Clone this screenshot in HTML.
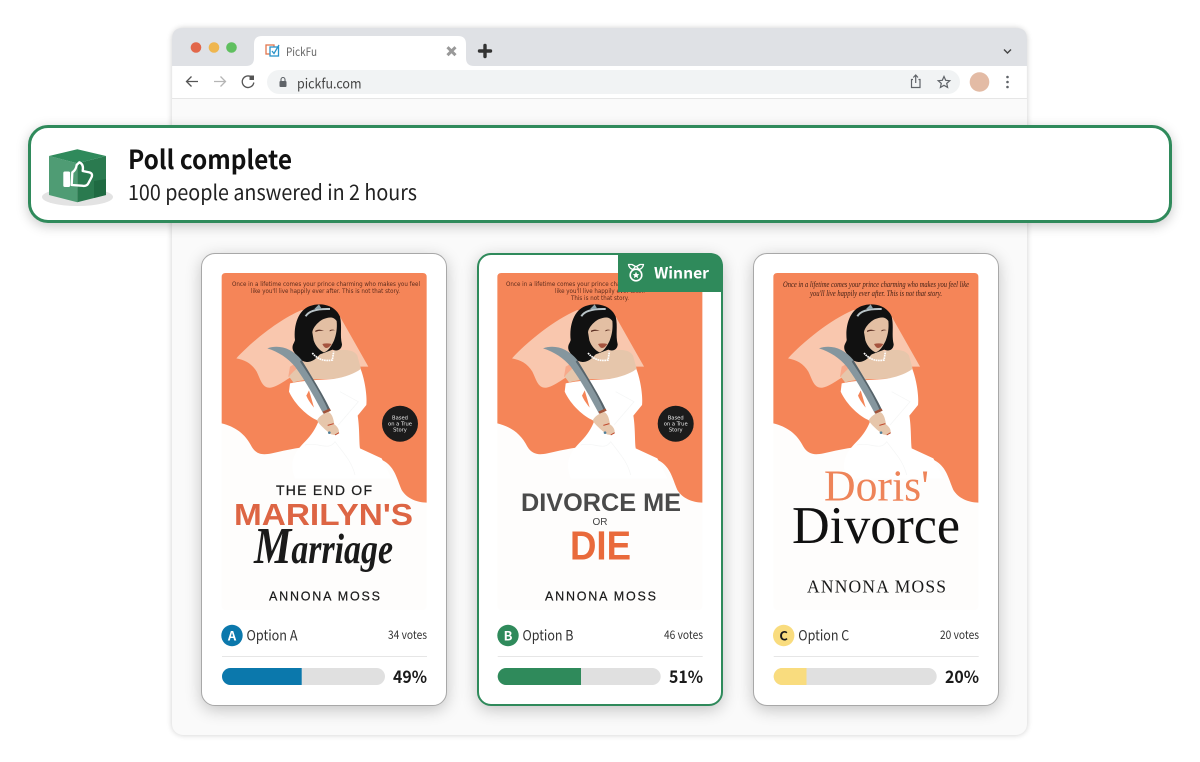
<!DOCTYPE html>
<html><head><meta charset="utf-8"><style>
html,body{margin:0;padding:0;background:#fff}
body{width:1200px;height:762px;position:relative;overflow:hidden}
.b{position:absolute;box-sizing:border-box}
svg{position:absolute;left:0;top:0}
.ui{font-family:"Noto Sans CJK JP","Liberation Sans",sans-serif}
</style></head><body>
<div class="b" style="left:172px;top:28px;width:855px;height:707px;border-radius:11px;background:#fafafa;box-shadow:0 0 6px rgba(0,0,0,.2)"></div>
<div class="b" style="left:201px;top:253px;width:246px;height:453px;border-radius:14px;background:#fff;border:1px solid #a8a8a8;box-shadow:0 4px 16px rgba(0,0,0,.22)"></div>
<div class="b" style="left:477px;top:253px;width:246px;height:453px;border-radius:14px;background:#fff;border:2px solid #2f8a5b;box-shadow:0 4px 16px rgba(0,0,0,.22)"></div>
<div class="b" style="left:753px;top:253px;width:246px;height:453px;border-radius:14px;background:#fff;border:1px solid #a8a8a8;box-shadow:0 4px 16px rgba(0,0,0,.22)"></div>
<svg width="1200" height="762" viewBox="0 0 1200 762" xmlns="http://www.w3.org/2000/svg">
<defs>
<g id="art">
<g transform="translate(195,245) scale(.33333)">
<rect x="80" y="84" width="615" height="1011" rx="12" fill="#fefdfc"/>
<path fill="#f58558" d="M80 535C120 545 150 565 170 605C185 630 205 630 230 625C290 612 340 600 400 605C470 612 530 625 570 650C600 670 605 700 620 735C635 760 665 772 695 773L695 96Q695 84 683 84L92 84Q80 84 80 96Z"/>
<path fill="#f9c7ae" d="M124 340C170 290 250 225 320 195L435 215L520 365L480 365L290 395C265 410 240 430 220 428C200 425 195 400 185 380C170 355 150 345 124 340Z"/>
<path fill="#f7a98a" d="M285 365L320 345L300 405L280 395Z"/>
<path fill="#e6c6ab" d="M365 305L415 318C440 312 478 312 487 332L498 372C470 390 450 402 400 402C370 402 330 402 295 412L282 395C300 370 345 345 365 305Z"/>
<path fill="#111" d="M300 285C295 240 310 195 345 183C375 172 420 178 435 215C442 245 434 270 441 298C440 315 425 320 413 314L375 328L368 335C360 345 345 352 335 351C318 350 303 332 294 316C289 300 298 295 300 285Z"/>
<path fill="#e3bfa3" d="M352 262C354 246 372 228 386 222C398 218 414 212 425 228C427 250 424 268 417 287C408 306 398 320 386 322C374 316 362 304 356 286Z"/>
<path fill="#5b2f22" d="M361 257Q374 250 387 258Q374 256 361 261Z"/>
<path fill="#5b2f22" d="M404 256Q412 252 420 256Q412 255 404 259Z"/>
<path fill="#a5543f" d="M382 297Q395 293 410 297Q400 312 390 308Q385 304 382 297Z"/>
<path fill="none" stroke="#b9c4c8" stroke-width="6" d="M332 214Q345 190 405 192"/>
<path fill="#8ea4ab" d="M358 192L372 178L380 192Z"/>
<path fill="none" stroke="#fff" stroke-width="5" stroke-dasharray="5 2" d="M352 324Q375 352 412 345L416 320"/>
<path fill="#fff" d="M285 415C330 405 380 405 415 402C450 397 480 385 497 372C508 400 517 450 514 480L488 512C494 550 492 590 495 610L560 640L590 700L300 700C280 650 300 620 330 590C350 570 362 550 370 530L365 525C340 515 300 480 282 440Z"/>
<path fill="#f58558" d="M342 436C347 452 352 470 357 488C349 478 339 465 334 452Z"/>
<path fill="none" stroke="#f4f5f5" stroke-width="2" d="M435 440L490 470L430 540M330 600C370 590 400 620 420 590C450 630 470 650 480 690"/>
<path fill="#85969e" d="M217 310C250 298 290 308 320 345C350 395 385 450 406 495L385 506C360 460 330 405 300 365C280 340 250 320 217 310Z"/>
<path fill="#56636a" d="M320 345C350 395 385 450 406 495L400 498C380 450 345 395 315 350Z"/>
<path fill="#a0533a" d="M383 500L404 490L408 497L387 507Z"/>
<path fill="#e6c6ab" d="M366 526C372 515 385 505 400 501C412 505 416 525 418 538C428 545 434 555 431 565C424 572 408 572 398 560C385 548 372 538 366 526Z"/>
<path fill="none" stroke="#c0482c" stroke-width="3" d="M398 541L416 536M420 570L432 563"/>
<circle cx="403" cy="563" r="4" fill="#4f7f9a"/>
</g>
</g>
<g id="opt">
<line x1="222" y1="656.500" x2="427" y2="656.500" stroke="#e6e6e6"/>
<rect x="222" y="668" width="163" height="17" rx="8.500" fill="#e0e0e0"/>
</g>
</defs>

<!-- browser chrome -->
<path fill="#dfe1e5" d="M172 66V39Q172 28 183 28H1016Q1027 28 1027 39V66Z"/>
<rect x="172.500" y="66" width="854" height="32" fill="#fff"/>
<line x1="172" y1="98.500" x2="1027" y2="98.500" stroke="#e6e6e6"/>
<circle cx="196" cy="47.500" r="5.300" fill="#e2674a"/><circle cx="214" cy="47.500" r="5.300" fill="#efb64f"/><circle cx="231.500" cy="47.500" r="5.300" fill="#5fbf5f"/>
<path fill="#fff" d="M246 66Q254 66 254 58V44Q254 36 262 36H458Q466 36 466 44V58Q466 66 474 66Z"/>
<rect x="266" y="45" width="8" height="9" fill="none" stroke="#e2764e" stroke-width="1.300"/>
<rect x="270" y="47" width="8.500" height="9" fill="#fff" stroke="#2a93c9" stroke-width="1.300"/>
<path d="M272 51L274 53.500L279 45" fill="none" stroke="#2a93c9" stroke-width="1.300"/>
<text x="286" y="56" class="ui" font-size="11.500" fill="#666" textLength="31" lengthAdjust="spacingAndGlyphs">PickFu</text>
<path d="M447.500 47.200L455.500 55.200M455.500 47.200L447.500 55.200" stroke="#999" stroke-width="3"/>
<path d="M485 45.500V56.500M479.500 51H490.500" stroke="#333" stroke-width="3.400" stroke-linecap="round"/>
<path d="M1004 49.500L1007.500 53L1011 49.500" fill="none" stroke="#444" stroke-width="1.400"/>
<path d="M198 81.500H187M191.500 76.500L186.500 81.500L191.500 86.500" fill="none" stroke="#555" stroke-width="1.300"/>
<path d="M214 81.500H225M220.500 76.500L225.500 81.500L220.500 86.500" fill="none" stroke="#b5b5b5" stroke-width="1.300"/>
<path d="M252.500 78A5.800 5.800 0 1 0 253.800 82.500" fill="none" stroke="#555" stroke-width="1.300"/>
<path d="M249.500 75.500H254V80H249.500Z" fill="#555"/>
<rect x="267" y="70" width="693" height="24" rx="12" fill="#f1f3f4"/>
<rect x="279.500" y="81" width="7" height="6" rx="1" fill="#5f6368"/>
<path d="M281 81V79.500A2 2 0 0 1 285 79.500V81" fill="none" stroke="#5f6368" stroke-width="1.100"/>
<text x="297" y="88.500" class="ui" font-size="13.500" fill="#444" textLength="64.500" lengthAdjust="spacingAndGlyphs">pickfu.com</text>
<path d="M913 79.500H911.500V87.500H920V79.500H918.500M915.700 83V75.500M913.300 77.500L915.700 75L918 77.500" fill="none" stroke="#5f6368" stroke-width="1.200"/>
<path d="M944 76.500L945.700 80.300L949.800 80.700L946.700 83.400L947.600 87.400L944 85.300L940.400 87.400L941.300 83.400L938.200 80.700L942.300 80.300Z" fill="none" stroke="#5f6368" stroke-width="1.200"/>
<circle cx="979.500" cy="82" r="9.800" fill="#e3bba5"/>
<circle cx="1007.500" cy="77" r="1.300" fill="#5f6368"/><circle cx="1007.500" cy="82" r="1.300" fill="#5f6368"/><circle cx="1007.500" cy="87" r="1.300" fill="#5f6368"/>

<!-- covers -->
<use href="#art"/>
<use href="#art" x="275.700"/>
<use href="#art" x="551.700"/>

<!-- badges (A and B only) -->
<circle cx="400" cy="423.700" r="18" fill="#1b1b1b"/>
<circle cx="675.700" cy="423.700" r="18" fill="#1b1b1b"/>
<g font-family="'DejaVu Sans',sans-serif" font-size="5.200" fill="#eee" text-anchor="middle">
<text x="400" y="419.500">Based</text><text x="400" y="425.500">on a True</text><text x="400" y="431.500">Story</text>
<text x="675.700" y="419.500">Based</text><text x="675.700" y="425.500">on a True</text><text x="675.700" y="431.500">Story</text>
</g>

<!-- cover A text -->
<g font-family="'DejaVu Sans',sans-serif" fill="#5e2c1c" font-size="6.200">
<text x="232" y="286" textLength="188" lengthAdjust="spacingAndGlyphs">Once in a lifetime comes your prince charming who makes you feel</text>
<text x="251" y="293" textLength="149" lengthAdjust="spacingAndGlyphs">like you'll live happily ever after. This is not that story.</text>
</g>
<text x="276" y="495" textLength="96" font-family="'Liberation Sans',sans-serif" font-size="14" fill="#1d1d1d" stroke="#1d1d1d" stroke-width=".25">THE END OF</text>
<text x="234" y="525" textLength="179" lengthAdjust="spacingAndGlyphs" font-family="'Liberation Sans',sans-serif" font-weight="bold" font-size="30.500" fill="#dd6544">MARILYN'S</text>
<text x="254" y="563" textLength="139" lengthAdjust="spacingAndGlyphs" font-family="'Liberation Serif',serif" font-style="italic" font-weight="bold" font-size="42" fill="#1a1a1a"><tspan font-size="52">M</tspan>arriage</text>
<text x="269" y="600.500" textLength="111" font-family="'Liberation Sans',sans-serif" font-size="12.500" fill="#1a1a1a" stroke="#1a1a1a" stroke-width=".2">ANNONA MOSS</text>

<!-- cover B text -->
<g font-family="'DejaVu Sans',sans-serif" fill="#5e2c1c" font-size="6.200">
<text x="506" y="286" textLength="188" lengthAdjust="spacingAndGlyphs">Once in a lifetime comes your prince charming who makes you feel</text>
<text x="555" y="293" textLength="90" lengthAdjust="spacingAndGlyphs">like you'll live happily ever after.</text>
<text x="571" y="300" textLength="58" lengthAdjust="spacingAndGlyphs">This is not that story.</text>
</g>
<text x="521" y="511" textLength="160" lengthAdjust="spacingAndGlyphs" font-family="'Liberation Sans',sans-serif" font-weight="bold" font-size="25" fill="#4a4a4a">DIVORCE ME</text>
<text x="600" y="525" text-anchor="middle" font-family="'Liberation Sans',sans-serif" font-size="10" fill="#444">OR</text>
<text x="570" y="559.500" textLength="61" lengthAdjust="spacingAndGlyphs" font-family="'Liberation Sans',sans-serif" font-weight="bold" font-size="41" fill="#e96a3b">DIE</text>
<text x="545" y="600.500" textLength="111" font-family="'Liberation Sans',sans-serif" font-size="12.500" fill="#1a1a1a" stroke="#1a1a1a" stroke-width=".2">ANNONA MOSS</text>

<!-- cover C text -->
<g font-family="'Liberation Serif',serif" font-style="italic" fill="#3f1e14" font-size="8.500">
<text x="783" y="287" textLength="186" lengthAdjust="spacingAndGlyphs">Once in a lifetime comes your prince charming who makes you feel like</text>
<text x="810" y="296" textLength="132" lengthAdjust="spacingAndGlyphs">you'll live happily ever after. This is not that story.</text>
</g>
<text x="824" y="500.700" textLength="105" lengthAdjust="spacingAndGlyphs" font-family="'Liberation Serif',serif" font-size="44" fill="#ee8459">Doris'</text>
<text x="792" y="543" textLength="168" lengthAdjust="spacingAndGlyphs" font-family="'Liberation Serif',serif" font-size="53" fill="#111">Divorce</text>
<text x="807" y="592.700" textLength="139" font-family="'Liberation Serif',serif" font-size="17.500" fill="#1a1a1a">ANNONA MOSS</text>

<!-- winner tab -->
<path fill="#2f8a5b" d="M618 253H709Q723 253 723 267V292H618Z"/>
<circle cx="636" cy="275" r="5.800" fill="none" stroke="#fff" stroke-width="1.600"/>
<path d="M628.500 264.500C629 267.500 631 269 633 269.500L635.500 266.500L632 264.500ZM643.500 264.500C643 267.500 641 269 639 269.500L636.500 266.500L640 264.500Z" fill="none" stroke="#fff" stroke-width="1.300" stroke-linejoin="round"/>
<path d="M636 271.800L637 274L639.300 274.300L637.600 275.800L638.100 278.100L636 276.900L633.900 278.100L634.400 275.800L632.700 274.300L635 274Z" fill="#fff"/>
<text x="654" y="278.500" class="ui" font-size="15.500" font-weight="700" fill="#fff" textLength="55" lengthAdjust="spacingAndGlyphs">Winner</text>

<!-- footers -->
<g class="ui">
<g><circle cx="232" cy="635.500" r="10.700" fill="#0b78ac"/>
<text x="232" y="640.500" text-anchor="middle" font-size="13" font-weight="700" fill="#fff">A</text>
<text x="246.500" y="640.500" font-size="14.500" fill="#333" textLength="51" lengthAdjust="spacingAndGlyphs">Option A</text>
<text x="388" y="639" font-size="11.500" fill="#333" textLength="39" lengthAdjust="spacingAndGlyphs">34 votes</text>
<use href="#opt"/>
<path fill="#0b78ac" d="M301.700 668H230.500A8.500 8.500 0 0 0 230.500 685H301.700Z"/>
<text x="393" y="683" font-size="17" font-weight="700" fill="#1a1a1a" textLength="34" lengthAdjust="spacingAndGlyphs">49%</text></g>
<g><circle cx="508" cy="635.500" r="10.700" fill="#2f8a5b"/>
<text x="508" y="640.500" text-anchor="middle" font-size="13" font-weight="700" fill="#fff">B</text>
<text x="522.500" y="640.500" font-size="14.500" fill="#333" textLength="51" lengthAdjust="spacingAndGlyphs">Option B</text>
<text x="664" y="639" font-size="11.500" fill="#333" textLength="39" lengthAdjust="spacingAndGlyphs">46 votes</text>
<use href="#opt" x="275.700"/>
<path fill="#2f8a5b" d="M581 668H506.200A8.500 8.500 0 0 0 506.200 685H581Z"/>
<text x="669" y="683" font-size="17" font-weight="700" fill="#1a1a1a" textLength="34" lengthAdjust="spacingAndGlyphs">51%</text></g>
<g><circle cx="783.700" cy="635.500" r="10.700" fill="#f9dc7e"/>
<text x="783.700" y="640.500" text-anchor="middle" font-size="13" font-weight="700" fill="#1a1a1a">C</text>
<text x="798.300" y="640.500" font-size="14.500" fill="#333" textLength="51" lengthAdjust="spacingAndGlyphs">Option C</text>
<text x="940" y="639" font-size="11.500" fill="#333" textLength="39" lengthAdjust="spacingAndGlyphs">20 votes</text>
<use href="#opt" x="551.700"/>
<path fill="#f9dc7e" d="M806.500 668H782.200A8.500 8.500 0 0 0 782.200 685H806.500Z"/>
<text x="945" y="683" font-size="17" font-weight="700" fill="#1a1a1a" textLength="34" lengthAdjust="spacingAndGlyphs">20%</text></g>
</g>
</svg>

<!-- banner -->
<div class="b" style="left:28px;top:125px;width:1144px;height:98px;border-radius:20px;background:#fff;border:3px solid #2f8a5b;box-shadow:0 3px 12px rgba(0,0,0,.22)"></div>
<svg width="1200" height="762" viewBox="0 0 1200 762" xmlns="http://www.w3.org/2000/svg">
<ellipse cx="77.500" cy="197" rx="35.500" ry="9" fill="#e3e3e3"/>
<path fill="#4f9c74" d="M49 156L77.300 163.300V202.300L49 195Z"/>
<path fill="#2a7a4f" d="M106 156L77.300 163.300V202.300L106 195Z"/>
<path fill="#2f8a5b" d="M77.300 149.300L106 156L77.300 163.300L49 156Z"/>
<path fill="#1f6a42" d="M94 181L106 179V195L94 198Z"/>
<rect x="63.300" y="171.500" width="6.800" height="15.500" rx="1.500" fill="#fff"/>
<path transform="translate(20,115) scale(.33333)" fill="none" stroke="#fff" stroke-width="7" stroke-linejoin="round" d="M155 210L157 172Q168 165 170 150L178 142Q192 148 188 168L208 172Q219 175 215 186L205 205Q200 215 185 212Z"/>
<text x="128" y="169" class="ui" font-size="26" font-weight="700" fill="#111" textLength="164" lengthAdjust="spacingAndGlyphs">Poll complete</text>
<text x="128" y="200" class="ui" font-size="21" fill="#222" textLength="289" lengthAdjust="spacingAndGlyphs">100 people answered in 2 hours</text>
</svg>
</body></html>
